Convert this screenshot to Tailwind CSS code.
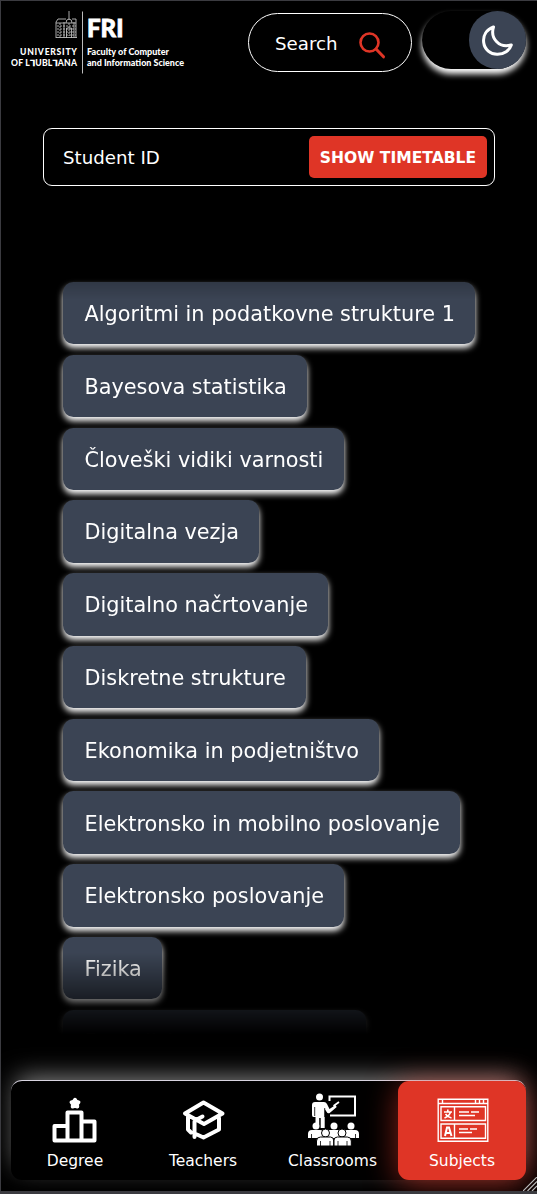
<!DOCTYPE html>
<html lang="en">
<head>
<meta charset="utf-8">
<title>FRI Timetable</title>
<script src="https://cdn.jsdelivr.net/npm/@tailwindcss/browser@4"></script>
</head>
<body class="bg-black">
<div class="relative flex h-[1194px] w-[537px] flex-col overflow-hidden border-t border-b-3 border-l border-[#3b3b40] bg-black pl-[10px] font-['DejaVu_Sans',sans-serif] text-white">
  <header class="flex h-[83px] items-start">
    <svg class="mt-[9px] h-[66px] w-[176px] shrink-0" viewBox="0 0 176 66" fill="#fff" font-family="Lato, sans-serif" font-weight="700">
      <path d="M71.500 1.500V63.500" stroke="#bbb" stroke-width="1"/>
      <g stroke="#bcbcbc" fill="none" stroke-width=".9">
        <path d="M58 1v9M55 13q0-4 3-4t3 4M45 28V12l2-3h8M45 13h20M61 9h4v19M45 27.500h21M53 12v16M63 12v16M55.500 28V18h5v10"/>
        <path d="M46 16h19M46 19h19M46 22h19M46 25h19" stroke-dasharray="2 1"/>
        <path d="M49 13v15M58 13v13" stroke-dasharray="2 1"/>
      </g>
      <text x="76" y="27" font-size="25" font-weight="900" stroke="#fff" stroke-width=".8" textLength="36.500" lengthAdjust="spacingAndGlyphs">FRI</text>
      <g font-size="9.200" font-weight="900">
        <text x="9" y="44.500" font-size="8.600" textLength="57">UNIVERSITY</text>
        <text x="0" y="56" font-size="8.600" textLength="66">OF L<tspan font-family="DejaVu Sans" font-size="9">⅂</tspan>UBL<tspan font-family="DejaVu Sans" font-size="9">⅂</tspan>ANA</text>
        <text x="76" y="44.500" textLength="82" lengthAdjust="spacingAndGlyphs">Faculty of Computer</text>
        <text x="76" y="56" textLength="97" lengthAdjust="spacingAndGlyphs">and Information Science</text>
      </g>
    </svg>
    <div class="mt-[12px] ml-[61px] flex h-[59px] w-[164px] shrink-0 items-center rounded-full border border-white pl-[26px]">
      <span class="w-[84px] pt-[3px] text-[18.200px]">Search</span>
      <svg class="mt-[5px] h-[27px] w-[27px]" viewBox="0 0 27 27" fill="none" stroke="#df3526" stroke-width="2.600" stroke-linecap="round"><circle cx="10.500" cy="10.500" r="9"/><path d="M17 17L24.500 24.800" stroke-width="3"/></svg>
    </div>
    <div class="mt-[10px] ml-[10px] flex h-[58px] w-[104px] shrink-0 justify-end rounded-full bg-black shadow-[0_5px_6px_#fff]">
      <div class="flex h-[58px] w-[57px] items-center justify-center rounded-full bg-[#3b4454]">
        <svg class="-ml-[2px] size-[32px]" viewBox="0 0 32 32" fill="none" stroke="#fff" stroke-width="3" stroke-linejoin="round"><path d="M12.500 3C5.500 5.500 1.800 11.500 2.700 18.500C3.500 25.500 9.500 30.500 16.500 30.300C23 30.200 28.500 26.500 30.300 21C18 24.500 9 14 12.500 3Z"/></svg>
      </div>
    </div>
  </header>

  <form class="mt-[44px] ml-[32px] flex h-[58px] w-[452px] shrink-0 items-center justify-between rounded-[9px] border border-white pr-[7px] pl-[19px]">
    <span class="pt-[2px] text-[18.200px]">Student ID</span>
    <button type="button" class="h-[42px] w-[178px] rounded-[5px] bg-[#df3526] pt-[3px] text-[15.550px] font-bold whitespace-nowrap">SHOW TIMETABLE</button>
  </form>

  <main class="mt-[86px] ml-[42px] flex h-[764px] shrink-0 flex-col items-start gap-[10.400px] overflow-hidden mask-[linear-gradient(to_bottom,rgba(0,0,0,.8)_8px,#000_28px,#000_681px,transparent_762px)] pt-[10px] pl-[10px] text-[20.800px] *:flex *:h-[62.400px] *:shrink-0 *:items-center *:rounded-[10.400px] *:bg-[#3b4454] *:pt-[3px] *:pr-[20.400px] *:pl-[21.500px] *:whitespace-nowrap *:shadow-[0_4px_6px_#fff]">
    <div>Algoritmi in podatkovne strukture 1</div>
    <div>Bayesova statistika</div>
    <div>Človeški vidiki varnosti</div>
    <div>Digitalna vezja</div>
    <div>Digitalno načrtovanje</div>
    <div>Diskretne strukture</div>
    <div>Ekonomika in podjetništvo</div>
    <div>Elektronsko in mobilno poslovanje</div>
    <div>Elektronsko poslovanje</div>
    <div>Fizika</div>
    <div>Funkcijsko programiranje</div>
  </main>

  <nav class="mt-[44px] grid h-[100px] w-[515px] shrink-0 grid-cols-[repeat(3,129px)_128px] rounded-[11px] border-t border-[#d8d4e0] bg-black text-center text-[15.500px] shadow-[0_-8px_26px_-6px_rgba(255,255,255,.55)]">
    <a class="-ml-px flex flex-col items-center pt-[13px]">
      <svg class="h-[54px] w-[54px] shrink-0" viewBox="0 0 54 54" fill="none" stroke="#fff" stroke-width="4" stroke-linejoin="round"><path d="M6.500 32H19.500V46.500H6.500ZM19.500 18.500H33.500V46.500H19.500ZM33.500 27.500H46.500V46.500H33.500Z"/><path d="M27 5.500l1.300 2 2.400.6-1.500 2 .3 2.700L27 12 24.500 12.800l.3-2.700-1.500-2 2.400-.6Z" fill="#fff" stroke-width="3.500"/></svg>
      <span class="leading-[26px]">Degree</span>
    </a>
    <a class="-ml-[3px] flex flex-col items-center pt-[12px]">
      <svg class="h-[54px] w-[54px] shrink-0" viewBox="0 0 54 54" fill="none" stroke="#fff" stroke-width="4" stroke-linejoin="round" stroke-linecap="round"><path d="M27.500 9.500L46.500 20.500L28 31L9 20.500ZM12 24V36.500L15 39.500M21 41.500L27.500 44.500L43 36.500V25M18.500 44V29Q18.500 27.500 20 27L26.500 23.500"/></svg>
      <span class="leading-[28px]">Teachers</span>
    </a>
    <a class="-ml-[2px] flex flex-col items-center pt-[12px]">
      <svg class="h-[54px] w-[54px] shrink-0" viewBox="0 0 54 54" fill="#fff">
        <path d="M23.500 8V3.500H49V22.500H24" fill="none" stroke="#fff" stroke-width="2"/>
        <circle cx="13.500" cy="4" r="3.500"/>
        <path d="M9 9h9q2 0 3 2l2.500 5 6-4 1.200 2-7 6q-2 1-3-1l-2-3V35h-4V25h-1.500v6H9.500V24H7.500q-1.500 0-1.500-2V12q0-3 3-3Z"/>
        <path d="M8.700 14v9M18.700 15v9" stroke="#000" stroke-width=".8"/>
        <path d="M27.500 13l5.500-4" stroke="#fff" stroke-width="1.800"/>
        <circle cx="10" cy="33" r="3.500"/><circle cx="28" cy="33" r="3.500"/><circle cx="45" cy="33" r="3.500"/>
        <path d="M2 45v-4q0-4 4-4h8q4 0 4 4v4ZM22 45v-8h12v8ZM37 45v-4q0-4 4-4h8q4 0 4 4v4Z"/>
        <g stroke="#000" stroke-width="1"><circle cx="19.500" cy="40" r="4"/><circle cx="36" cy="40" r="4"/><path d="M10.500 53v-5q0-4 4-4h10q3.300 0 3.300 4v5ZM27.800 53v-5q0-4 3.500-4h10q4 0 4 4v5Z"/></g>
        <path d="M5.500 41v4M49.500 41v4M14.500 48v5M24 48v5M32 48v5M41 48v5" stroke="#000" stroke-width=".8"/>
      </svg>
      <span class="leading-[28px]">Classrooms</span>
    </a>
    <a class="flex flex-col items-center rounded-[11px] bg-[#df3526] pt-[13px] shadow-[0_4px_32px_rgba(223,53,38,.6)]">
      <svg class="ml-px h-[54px] w-[54px] shrink-0" viewBox="0 0 54 54" fill="none" stroke="#fff" stroke-width="1.400"><path d="M2.200 5.200H51.800V47.300H2.200ZM2.200 9.500H51.800M6.500 5v4.500M39.500 5v4.500M43.500 5v4.500M47.500 5v4.500M5 12.700H49.500V26.500H5ZM5 30H49.500V44.300H5ZM18.500 13v13.500M18.500 30v14.300"/><path d="M23 18h10M35 18h8M23 21.500h16M23 35h9M34 35h7M23 38.500h13M11.800 15.500v2M8 18h8M14.500 18q-1 4-6 6M9.500 20q2 3 6 4" stroke-width="1.600"/><path d="M9 42L11 33.500h2L15.500 42M9.500 39h5.500" stroke-width="2"/></svg>
      <span class="leading-[26px]">Subjects</span>
    </a>
  </nav>
  <svg class="absolute right-0 bottom-0 size-[14px]" viewBox="0 0 14 14" stroke="#bbb" stroke-width="1.200"><path d="M0 14L14 0M4.500 14L14 4.500M9 14L14 9"/></svg>
</div>
</body>
</html>
